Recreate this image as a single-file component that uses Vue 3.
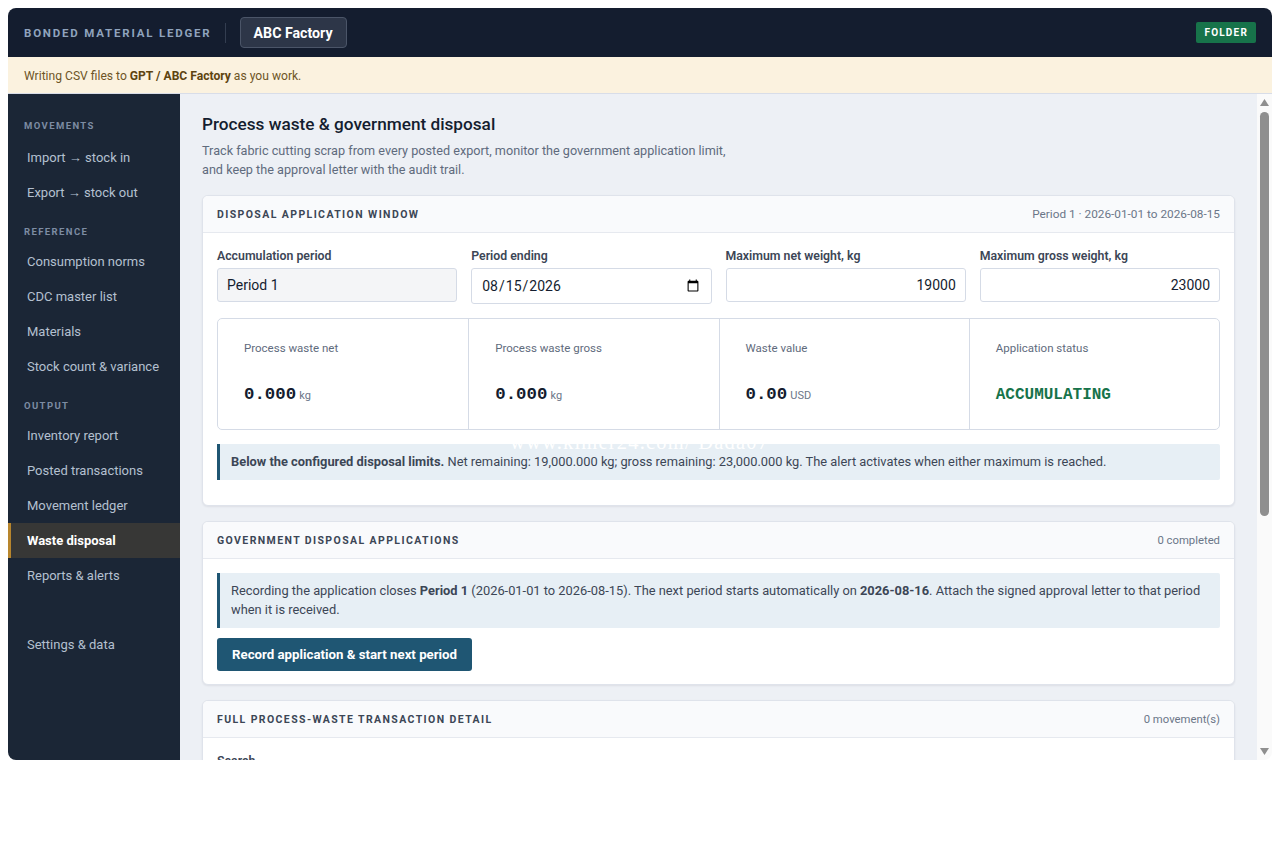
<template>
  <div class="app-frame">
    <div class="app-shell">
      <header class="topbar">
        <span class="brand">BONDED MATERIAL LEDGER</span>
        <span class="topbar-sep"></span>
        <button class="company-btn">ABC Factory</button>
        <span class="mode-badge">FOLDER</span>
      </header>
      <div class="notice">Writing CSV files to <strong>GPT / ABC Factory</strong> as you work.</div>
      <div class="shell-body">
        <nav class="sidebar">
          <div v-for="group in navGroups" :key="group.label" class="nav-group" :class="{ spaced: !group.label }">
            <div v-if="group.label" class="nav-label">{{ group.label }}</div>
            <a
              v-for="item in group.items"
              :key="item"
              class="nav-item"
              :class="{ active: item === activeItem }"
            >{{ item }}</a>
          </div>
        </nav>
        <main class="content">
          <h1 class="page-title">Process waste &amp; government disposal</h1>
          <p class="page-sub">Track fabric cutting scrap from every posted export, monitor the government application limit,<br>and keep the approval letter with the audit trail.</p>

          <section class="card">
            <div class="card-head">
              <h2>DISPOSAL APPLICATION WINDOW</h2>
              <span class="wide">Period 1 · 2026-01-01 to 2026-08-15</span>
            </div>
            <div class="card-body first-body">
              <div class="field-grid">
                <label class="field">
                  <span>Accumulation period</span>
                  <input class="input readonly" value="Period 1" readonly>
                </label>
                <label class="field">
                  <span>Period ending</span>
                  <input class="input date" type="date" value="2026-08-15">
                </label>
                <label class="field">
                  <span>Maximum net weight, kg</span>
                  <input class="input num" value="19000">
                </label>
                <label class="field">
                  <span>Maximum gross weight, kg</span>
                  <input class="input num" value="23000">
                </label>
              </div>
              <div class="stats">
                <div v-for="stat in stats" :key="stat.label" class="stat">
                  <div class="stat-label">{{ stat.label }}</div>
                  <div class="stat-value" :class="{ good: !stat.unit }">{{ stat.value }}<small v-if="stat.unit">{{ stat.unit }}</small></div>
                </div>
              </div>
              <div class="alert">
                <span class="watermark">www.kimer24.com/ Dada07</span>
                <strong>Below the configured disposal limits.</strong> Net remaining: 19,000.000 kg; gross remaining: 23,000.000 kg. The alert activates when either maximum is reached.
              </div>
            </div>
          </section>

          <section class="card">
            <div class="card-head">
              <h2>GOVERNMENT DISPOSAL APPLICATIONS</h2>
              <span>0 completed</span>
            </div>
            <div class="card-body">
              <div class="alert tall">Recording the application closes <strong>Period 1</strong> (2026-01-01 to 2026-08-15). The next period starts automatically on <strong>2026-08-16</strong>. Attach the signed approval letter to that period when it is received.</div>
              <button class="primary-btn">Record application &amp; start next period</button>
            </div>
          </section>

          <section class="card last">
            <div class="card-head">
              <h2>FULL PROCESS-WASTE TRANSACTION DETAIL</h2>
              <span>0 movement(s)</span>
            </div>
            <div class="card-body">
              <label class="field">
                <span>Search</span>
                <input class="input" placeholder="Search movements">
              </label>
              <div class="empty-row">No process-waste movements yet.</div>
            </div>
          </section>
        </main>
        <div class="scrollbar">
          <svg width="9" height="7" viewBox="0 0 9 7"><path d="M4.5 0 9 7H0z" fill="#8f8f8f"/></svg>
          <div class="scroll-thumb"></div>
          <svg class="arrow-down" width="9" height="7" viewBox="0 0 9 7"><path d="M0 0h9L4.5 7z" fill="#8f8f8f"/></svg>
        </div>
      </div>
    </div>
  </div>
</template>

<script setup>
const activeItem = 'Waste disposal'

const navGroups = [
  { label: 'MOVEMENTS', items: ['Import → stock in', 'Export → stock out'] },
  { label: 'REFERENCE', items: ['Consumption norms', 'CDC master list', 'Materials', 'Stock count & variance'] },
  { label: 'OUTPUT', items: ['Inventory report', 'Posted transactions', 'Movement ledger', 'Waste disposal', 'Reports & alerts'] },
  { label: '', items: ['Settings & data'] }
]

const stats = [
  { label: 'Process waste net', value: '0.000', unit: 'kg' },
  { label: 'Process waste gross', value: '0.000', unit: 'kg' },
  { label: 'Waste value', value: '0.00', unit: 'USD' },
  { label: 'Application status', value: 'ACCUMULATING', unit: '' }
]
</script>

<style>
html, body {
  margin: 0;
  background: #fff;
}
</style>

<style scoped>
* {
  box-sizing: border-box;
}

.app-frame {
  padding: 8px;
  height: 855px;
  font-family: Roboto, "Noto Sans", sans-serif;
  color: #141d2f;
}

.app-shell {
  height: 752px;
  border-radius: 8px;
  overflow: hidden;
  display: flex;
  flex-direction: column;
}

.topbar {
  height: 49px;
  flex: none;
  background: #141d2f;
  display: flex;
  align-items: center;
  padding: 0 16px;
}

.brand {
  font-size: 11.5px;
  font-weight: 700;
  letter-spacing: 1.8px;
  color: #8fa3bd;
}

.topbar-sep {
  width: 1px;
  height: 20px;
  background: #333d50;
  margin: 0 14px 0 13px;
}

.company-btn {
  height: 31px;
  padding: 0 13px;
  background: #2d3648;
  border: 1px solid #4b5568;
  border-radius: 4px;
  color: #fff;
  font: inherit;
  font-size: 14.2px;
  font-weight: 700;
}

.mode-badge {
  margin-left: auto;
  height: 21px;
  line-height: 21px;
  padding: 0 8px;
  background: #17734a;
  border-radius: 2px;
  color: #fff;
  font-size: 10px;
  font-weight: 700;
  letter-spacing: 1.2px;
}

.notice {
  height: 37px;
  flex: none;
  padding: 1px 16px 0;
  display: flex;
  align-items: center;
  white-space: pre;
  background: #fbf2df;
  border-bottom: 1px solid #d8dde8;
  font-size: 12.1px;
  color: #6e5526;
}

.notice strong {
  color: #5e4410;
}

.shell-body {
  flex: 1;
  min-height: 0;
  display: flex;
}

.sidebar {
  width: 172px;
  flex: none;
  background: #1b2636;
  padding-top: 25px;
}

.nav-group {
  margin-bottom: 15px;
}

.nav-group.spaced {
  margin-top: 34px;
}

.nav-label {
  height: 13px;
  line-height: 13px;
  padding-left: 16px;
  margin-bottom: 6px;
  font-size: 9.5px;
  font-weight: 700;
  letter-spacing: 1.4px;
  color: #7d8ca3;
}

.nav-group:first-child .nav-label {
  margin-bottom: 8px;
}

.nav-item {
  display: block;
  height: 35px;
  line-height: 35px;
  padding-left: 16px;
  border-left: 3px solid transparent;
  font-size: 13px;
  color: #b4c0d0;
}

.nav-item.active {
  background: #373736;
  border-left-color: #b8862d;
  color: #fff;
  font-weight: 700;
}

.content {
  flex: 1;
  min-width: 0;
  overflow-y: auto;
  background: #edf0f5;
  padding: 20px 22px 22px;
}

.scrollbar {
  width: 15px;
  flex: none;
  background: #fafafa;
  display: flex;
  flex-direction: column;
  align-items: center;
  padding: 5px 0;
}

.scrollbar svg {
  display: block;
  flex: none;
}

.scroll-thumb {
  width: 9px;
  height: 404px;
  margin-top: 6px;
  background: #8f8f8f;
  border-radius: 5px;
}

.arrow-down {
  margin-top: auto;
}

.page-title {
  margin: 0 0 7px;
  font-size: 17.2px;
  line-height: 20px;
  font-weight: 500;
  color: #141d2f;
}

.page-sub {
  margin: 0 0 16px;
  font-size: 12.67px;
  line-height: 19px;
  color: #5f6b7d;
}

.card {
  background: #fff;
  border: 1px solid #dfe3eb;
  border-radius: 6px;
  box-shadow: 0 1px 2px rgba(20, 29, 47, 0.08);
  margin-bottom: 15px;
  overflow: hidden;
}

.card.last {
  margin-bottom: 0;
}

.card-head {
  height: 37px;
  padding: 0 14px;
  display: flex;
  align-items: center;
  justify-content: space-between;
  background: #f9fafc;
  border-bottom: 1px solid #e6e9ef;
}

.card-head h2 {
  margin: 0;
  font-size: 10.5px;
  font-weight: 700;
  letter-spacing: 1.4px;
  color: #3c4656;
}

.card-head span {
  font-size: 11.3px;
  color: #6b7688;
}

.card-head span.wide {
  font-size: 11.8px;
}

.card-body {
  padding: 14px 14px 13px;
}

.first-body {
  padding-bottom: 25px;
}

.field-grid {
  display: grid;
  grid-template-columns: repeat(4, 1fr);
  gap: 14px;
  align-items: start;
}

.field {
  display: flex;
  flex-direction: column;
  gap: 2px;
}

.field > span {
  font-size: 12.3px;
  line-height: 19px;
  font-weight: 600;
  color: #3c4656;
}

.input {
  height: 34px;
  width: 100%;
  padding: 0 9px;
  border: 1px solid #d5dbe6;
  border-radius: 3px;
  background: #fff;
  font: inherit;
  font-size: 14px;
  color: #141d2f;
}

.input.readonly {
  background: #f4f5f7;
}

.input.date {
  height: 36px;
}

.input.num {
  text-align: right;
}

.stats {
  margin-top: 14px;
  height: 112px;
  display: grid;
  grid-template-columns: repeat(4, 1fr);
  border: 1px solid #d5dbe6;
  border-radius: 5px;
}

.stat {
  padding: 22px 26px 0;
  border-left: 1px solid #d5dbe6;
}

.stat:first-child {
  border-left: 0;
}

.stat-label {
  font-size: 11.5px;
  line-height: 15px;
  color: #5f6b7d;
}

.stat-value {
  margin-top: 27px;
  font-family: "Liberation Mono", monospace;
  font-size: 17.4px;
  line-height: 24px;
  font-weight: 700;
  color: #141d2f;
}

.stat-value.good {
  font-size: 16px;
  color: #17734a;
}

.stat-value small {
  margin-left: 3px;
  font-family: Roboto, sans-serif;
  font-size: 11px;
  font-weight: 400;
  color: #6b7688;
}

.alert {
  position: relative;
  margin-top: 14px;
  height: 36px;
  display: block;
  line-height: 36px;
  padding: 0 11px;
  background: #e7eff5;
  border-left: 3px solid #1f5673;
  border-radius: 0 2px 2px 0;
  font-size: 12.85px;
  color: #3c4656;
}

.alert.tall {
  margin-top: 0;
  height: 55px;
  line-height: 19px;
  padding-top: 8px;
}

.watermark {
  position: absolute;
  left: 290px;
  top: -14px;
  line-height: 24px;
  font-family: "Liberation Serif", serif;
  font-size: 20.5px;
  letter-spacing: 1.2px;
  color: #fff;
  white-space: nowrap;
  pointer-events: none;
}

.primary-btn {
  display: block;
  margin-top: 10px;
  height: 33px;
  padding: 0 15px;
  background: #1f5673;
  border: 0;
  border-radius: 3px;
  color: #fff;
  font: inherit;
  font-size: 13.25px;
  font-weight: 700;
}

.empty-row {
  margin-top: 14px;
  height: 260px;
  padding-top: 20px;
  font-size: 12px;
  color: #6b7688;
  text-align: center;
  border-top: 1px solid #e6e9ef;
}
</style>
